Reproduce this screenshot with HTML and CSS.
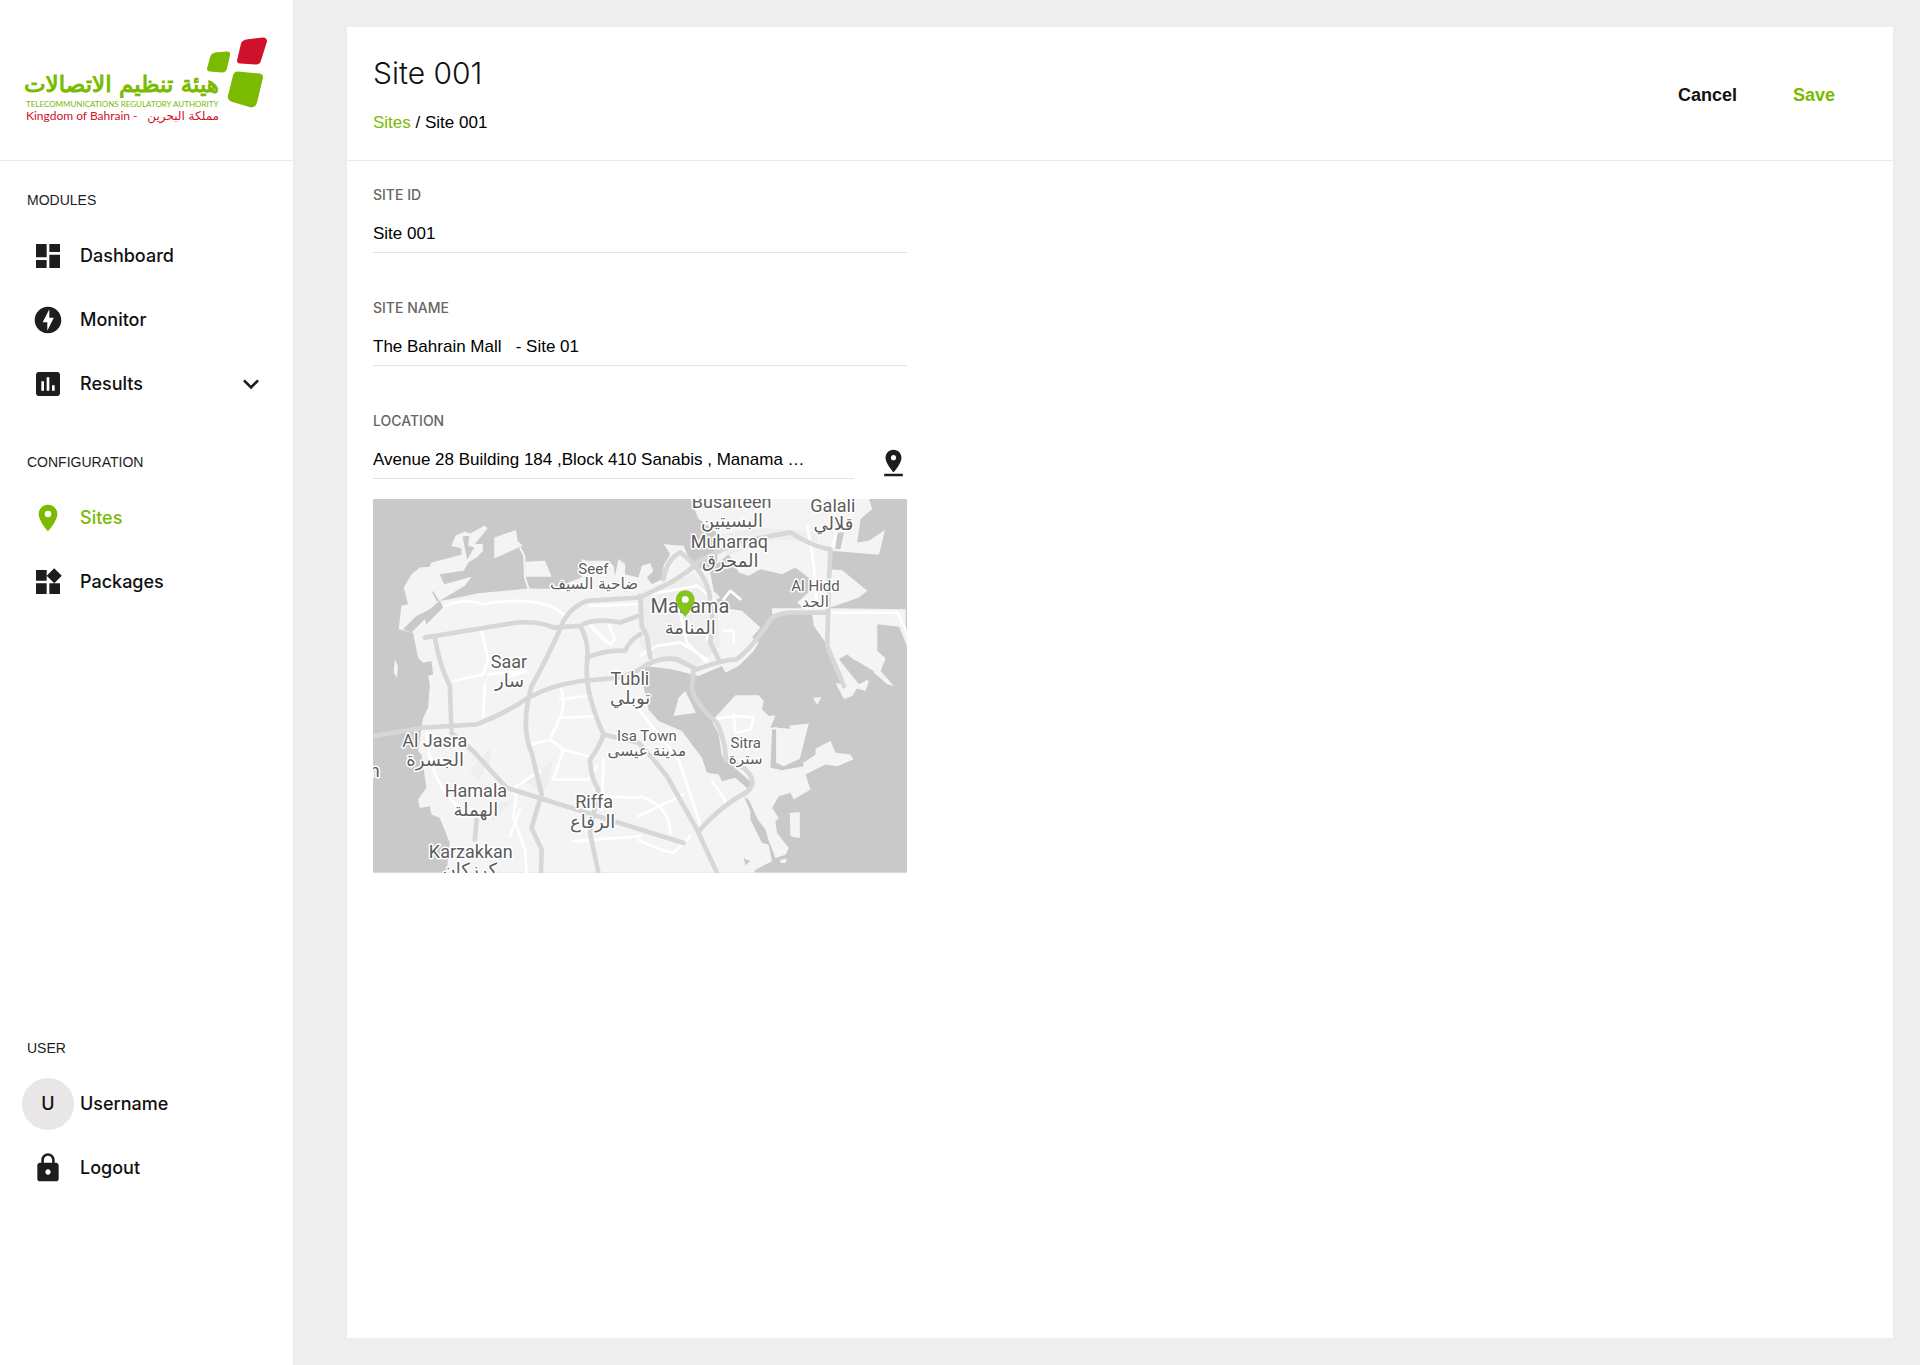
FILE: index.html
```html
<!DOCTYPE html>
<html lang="en">
<head>
<meta charset="utf-8">
<meta name="viewport" content="width=device-width, initial-scale=1">
<title>Site 001</title>
<link rel="stylesheet" href="styles.css">
</head>
<body>
<div class="app">
  <aside class="sidebar">
    <div class="brand">
      <svg class="logo" viewBox="0 0 242 90" role="img" aria-label="Telecommunications Regulatory Authority">
        <path class="logo-green" d="M190 22Q191 18 195 17L207 16Q211 16 210 20L207 33Q206 37 202 37L190 36Q187 36 187 33Z"/>
        <path class="logo-red" d="M221 8Q222 5 226 4L243 2Q247 2 247 6L241 25Q240 29 236 29L220 28Q217 28 217 25Z"/>
        <path class="logo-green" d="M213 40Q214 36 218 36L239 38Q243 38 243 42L237 67Q236 72 231 72L211 66Q207 64 208 60Z"/>
        <text class="logo-ar" x="199" y="56">هيئة تنظيم الاتصالات</text>
        <text class="logo-en" x="6" y="71">TELECOMMUNICATIONS REGULATORY AUTHORITY</text>
        <text class="logo-sub" x="6" y="84">Kingdom of Bahrain -</text>
        <text class="logo-sub-ar" x="199" y="84">مملكة البحرين</text>
      </svg>
    </div>
    <nav class="section">
      <h2 class="section-title">MODULES</h2>
      <a class="item" href="#"><span class="cell"><svg class="icon" viewBox="0 0 24 24"><path d="M3 13h8V3H3v10zm0 8h8v-6H3v6zm10 0h8V11h-8v10zm0-18v6h8V3h-8z"/></svg></span>Dashboard</a>
      <a class="item" href="#"><span class="cell"><svg class="icon" viewBox="0 0 24 24"><path d="M12 2.020c-5.510 0-9.980 4.470-9.980 9.980s4.470 9.980 9.980 9.980 9.980-4.470 9.980-9.980S17.510 2.020 12 2.020zM11.480 20v-6.260H8L13 4v6.260h3.350L11.480 20z"/></svg></span>Monitor</a>
      <a class="item" href="#"><span class="cell"><svg class="icon" viewBox="0 0 24 24"><path d="M19 3H5c-1.100 0-2 .9-2 2v14c0 1.100.9 2 2 2h14c1.100 0 2-.9 2-2V5c0-1.100-.9-2-2-2zM9 17H7v-7h2v7zm4 0h-2V7h2v10zm4 0h-2v-4h2v4z"/></svg></span>Results<svg class="icon chevron" viewBox="0 0 24 24"><path d="M7.410 8.590L12 13.170l4.590-4.580L18 10l-6 6-6-6 1.410-1.410z"/></svg></a>
    </nav>
    <nav class="section section-config">
      <h2 class="section-title">CONFIGURATION</h2>
      <a class="item item-active" href="#"><span class="cell"><svg class="icon" viewBox="0 0 24 24"><path d="M12 2C8.130 2 5 5.130 5 9c0 5.250 7 13 7 13s7-7.750 7-13c0-3.870-3.130-7-7-7zm0 9.500a2.500 2.500 0 0 1 0-5 2.500 2.500 0 0 1 0 5z"/></svg></span>Sites</a>
      <a class="item" href="#"><span class="cell"><svg class="icon" viewBox="0 0 24 24"><path d="M13 13v8h8v-8h-8zM3 21h8v-8H3v8zM3 3v8h8V3H3zm13.660-1.310L11 7.340 16.660 13l5.660-5.660-5.660-5.650z"/></svg></span>Packages</a>
    </nav>
    <nav class="section section-user">
      <h2 class="section-title">USER</h2>
      <a class="item" href="#"><span class="cell avatar">U</span>Username</a>
      <a class="item" href="#"><span class="cell"><svg class="icon" viewBox="0 0 24 24"><path d="M18 8h-1V6c0-2.760-2.240-5-5-5S7 3.240 7 6v2H6c-1.100 0-2 .9-2 2v10c0 1.100.9 2 2 2h12c1.100 0 2-.9 2-2V10c0-1.100-.9-2-2-2zm-6 9c-1.100 0-2-.9-2-2s.9-2 2-2 2 .9 2 2-.9 2-2 2zm3.100-9H8.900V6c0-1.710 1.390-3.100 3.100-3.100 1.710 0 3.100 1.390 3.100 3.100v2z"/></svg></span>Logout</a>
    </nav>
  </aside>

  <main class="main">
    <div class="card">
      <header class="card-header">
        <div>
          <h1 class="title">Site 001</h1>
          <p class="breadcrumb"><a href="#">Sites</a> / Site 001</p>
        </div>
        <div class="actions">
          <button class="action" type="button">Cancel</button>
          <button class="action action-save" type="submit" form="site-form">Save</button>
        </div>
      </header>
      <form class="form" id="site-form">
        <div class="field">
          <label for="site-id">SITE ID</label>
          <input id="site-id" type="text" value="Site 001">
        </div>
        <div class="field">
          <label for="site-name">SITE NAME</label>
          <input id="site-name" type="text" value="The Bahrain Mall &nbsp; - Site 01">
        </div>
        <div class="field">
          <label for="location">LOCATION</label>
          <div class="location-row">
            <input id="location" type="text" value="Avenue 28 Building 184 ,Block 410 Sanabis , Manama …">
            <button class="pin-button" type="button" aria-label="Pick on map"><svg viewBox="2 0 20 24"><path d="M18 8c0-3.310-2.690-6-6-6S6 4.690 6 8c0 4.500 6 11 6 11s6-6.500 6-11zm-8 0c0-1.100.9-2 2-2s2 .9 2 2-.89 2-2 2c-1.100 0-2-.9-2-2zM5 20v2h14v-2H5z"/></svg></button>
          </div>
          <svg class="map" viewBox="0 0 1599 1119" role="img" aria-label="Map of northern Bahrain">
            <rect class="sea" width="1599" height="1119"/>
            <g class="land">
              <path d="M115 400L77 390 85 320 105 315 92 265 115 225 140 205 170 203 175 190 265 167 265 148 235 140 247 110 275 97 290 103 335 79 343 88 305 135 328 135 330 155 310 175 285 190 272 215 200 225 213 255 295 233 275 260 200 305 230 300 315 282 465 268 575 270 585 250 625 235 625 180 640 185 705 185 720 200 725 230 735 180 755 195 755 225 795 235 805 200 830 192 840 215 820 235 835 255 865 240 870 200 890 165 870 135 895 138 930 140 945 175 960 200 1010 220 1020 275 1040 295 1010 310 1040 325 1105 335 1160 385 1135 415 1155 430 1140 455 1095 500 1055 520 1045 500 975 530 895 510 815 500 810 560 825 630 855 665 925 695 985 775 1000 820 1035 825 1045 845 1085 835 1125 870 1120 895 1140 955 1185 1035 1195 1085 1145 1110 1140 1119 220 1119 230 1030 220 1005 200 955 175 945 170 920 140 925 135 900 160 865 145 765 135 755 150 655 165 625 170 555 165 530 180 525 175 485 150 490 135 475 120 400Z"/>
              <path d="M363 115L428 93 433 125 448 140 363 178ZM457 188L515 185 535 233 457 233ZM65 480L75 500 72 535 62 520Z"/>
              <path d="M950 0L1485 0 1495 30 1460 60 1450 130 1485 125 1533 93 1515 167 1370 155 1365 210 1405 213 1480 275 1455 295 1370 325 1370 327 1595 330 1595 385 1510 375 1510 455 1533 475 1515 525 1440 480 1470 540 1485 545 1475 575 1405 555 1355 430 1320 380 1315 345 1195 345 1195 327 1290 327 1270 310 1315 270 1310 240 1265 205 1225 225 1160 210 1125 230 1095 220 1065 165 1030 195 1035 105 975 60Z"/>
              <path d="M1490 455L1535 478 1520 515 1560 560 1540 555 1500 520ZM1570 370L1599 395 1599 440Z"/>
              <path d="M1015 665L1085 588 1155 588 1170 605 1165 630 1185 650 1205 648 1190 685 1305 672 1275 790 1330 745 1370 725 1385 760 1430 765 1438 780 1390 800 1355 795 1295 825 1310 870 1260 900 1250 880 1215 890 1195 925 1215 955 1205 965 1210 1000 1245 1045 1235 1065 1205 1075 1190 1035 1145 945 1120 890 1140 855 1095 815 1045 770 1035 705Z"/>
              <path d="M1248 940L1278 937 1278 1015 1250 1010ZM900 650L915 595 935 575 950 605 967 640ZM1317 595L1343 593 1330 617ZM1385 550L1450 565 1435 590 1410 600ZM1220 1080L1240 1077 1235 1090 1220 1090Z"/>
            </g>
            <g class="water-cut">
              <path d="M90 390L130 350 170 330 200 305 210 325 160 375 155 360 115 400ZM268 112L288 110 285 140 303 145 282 182ZM180 275L198 305 192 308 178 280Z"/>
              <path d="M1110 890L1130 910 1145 950 1175 990 1188 1035 1165 1030 1130 960 1130 935ZM1395 480L1420 465 1450 490 1475 545 1455 555ZM1390 100L1410 100 1400 150 1385 150ZM1110 1075L1130 1085 1115 1097Z"/>
              <path d="M1195 690L1207 690 1207 790 1230 800 1285 775 1290 800 1225 812 1190 805ZM1215 665L1245 675 1250 688 1210 685ZM1285 780L1325 740 1325 765 1290 790Z"/>
            </g>
            <path class="causeway" d="M440 145L453 170 455 235 467 272"/>
            <g class="urban">
              <path d="M790 285L960 225 1030 300 1040 440 960 510 850 470 800 440ZM1020 110L1160 85 1330 100 1330 130 1200 120 1060 170ZM290 815L350 745 350 790 315 840ZM455 845L540 780 525 850 505 885ZM350 920L420 900 360 965Z"/>
            </g>
            <g class="street">
              <path d="M215 320Q280 295 330 315Q500 285 570 345M325 395L345 480 330 525 240 545M345 525L460 515 400 535M335 555L330 650M650 375L710 435 725 420 705 375M650 380L700 430M560 560Q580 610 560 655L530 720 475 735M560 600L640 590M560 655L665 650M530 720L570 750 660 775M570 750L540 840 645 840 670 800M500 815Q460 840 415 870L430 890 420 950 455 1050 460 1119M410 1010L440 930M160 700Q170 850 260 925M690 780L685 930M685 890L795 895M600 1025L800 1010M795 630L915 780 980 975M650 320L800 315M800 290L970 260 1020 300 1000 420M800 470L850 440 920 430 1000 480M920 340L940 430 1010 500M1080 430L1080 395 1050 395M1080 645L1085 700M1025 660Q1080 645 1140 655L1130 690 1090 700M795 950L930 885M800 890Q890 920 890 1000M1015 845Q1050 890 1060 920M795 1020Q850 1050 900 1060L950 1010M1300 80Q1325 200 1330 325M1370 340L1570 340 1599 400M1390 95L1370 160M1050 300L1070 275 1100 300"/>
            </g>
            <g class="road">
              <path d="M0 710L150 685 310 675Q400 640 465 595Q530 560 620 545L740 535 800 510M155 415L430 370Q500 365 540 385L620 380Q660 355 740 370L795 350M185 415Q200 500 230 560L235 690M235 700L300 755 400 865M400 865L930 1030M475 560Q440 680 475 760L505 885Q490 930 475 985L505 1050 503 1119M475 560Q520 480 560 390Q580 330 640 305L800 295 900 245Q940 220 970 195M310 960L305 1020M620 380Q650 430 640 500Q635 580 690 705M690 705Q680 740 650 780Q650 830 675 870L650 1000 675 1119M690 705L795 730Q850 790 880 830L970 990 1030 1119M640 475Q700 450 755 455Q770 420 800 405"/>
              <path d="M800 510Q850 470 910 480L970 510Q1050 480 1090 480Q1150 430 1190 360Q1215 338 1260 340L1365 340M800 290L805 380 820 410 830 475M870 240Q880 180 920 160Q1000 220 1010 300Q1020 370 1010 430L1035 480M970 190L1090 130 1250 100Q1320 145 1370 150L1365 250 1360 440 1410 560M960 510L955 570Q970 620 1030 670Q1060 740 1055 780L1110 805Q1160 850 1115 880Q1040 920 975 995"/>
            </g>
            <g class="place">
              <text x="660" y="224">Seef</text><text x="1325" y="277">Al Hidd</text><text x="820" y="724">Isa Town</text><text x="1116" y="747">Sitra</text>
            </g>
            <g class="place place-town">
              <text x="1074" y="27">Busaiteen</text><text x="1377" y="39">Galali</text><text x="1067" y="148">Muharraq</text><text x="407" y="507">Saar</text><text x="769" y="557">Tubli</text><text x="185" y="743">Al Jasra</text><text x="308" y="891">Hamala</text><text x="662" y="926">Riffa</text><text x="293" y="1074">Karzakkan</text><text x="5" y="832">n</text>
            </g>
            <g class="place place-city"><text x="949" y="341">Manama</text></g>
            <g class="place place-ar">
              <text x="662" y="270">ضاحية السيف</text><text x="1325" y="322">الحد</text><text x="820" y="769">مدينة عيسى</text><text x="1116" y="794">سترة</text>
            </g>
            <g class="place place-ar place-ar-town">
              <text x="1075" y="84">البسيتين</text><text x="1379" y="92">قلالي</text><text x="1070" y="203">المحرق</text><text x="409" y="562">سار</text><text x="770" y="614">توبلي</text><text x="186" y="799">الجسرة</text><text x="308" y="948">الهملة</text><text x="658" y="985">الرفاع</text><text x="290" y="1130">كرزكان</text><text x="950" y="403">المنامة</text>
            </g>
            <path class="marker" transform="translate(887 265) scale(4)" d="M12 2C8.130 2 5 5.130 5 9c0 5.250 7 13 7 13s7-7.750 7-13c0-3.870-3.130-7-7-7zm0 9.500a2.500 2.500 0 0 1 0-5 2.500 2.500 0 0 1 0 5z"/>
            <circle class="marker-hole" cx="935" cy="301" r="10"/>
          </svg>
        </div>
      </form>
    </div>
  </main>
</div>
</body>
</html>
```
FILE: styles.css
```css
:root {
  --green: #7aba00;
  --red: #d0112b;
  --ink: #1d1d1d;
  --line: #e8e8e8;
  --ui: "Liberation Sans", Arial, sans-serif;
  --medium: Inter, "Liberation Sans", sans-serif;
}
* { box-sizing: border-box; }
body {
  margin: 0;
  background: #eee;
  color: #000;
  font: 17px/24px var(--ui);
}
a { color: inherit; text-decoration: none; }
h1, h2, p { margin: 0; font-weight: 400; }
button { padding: 0; border: 0; background: none; cursor: pointer; }

.app { display: flex; min-height: 100vh; }

/* Sidebar */
.sidebar {
  display: flex;
  flex: none;
  flex-direction: column;
  width: 293px;
  background: #fff;
}
.brand {
  padding: 35px 20px 34px;
  border-bottom: 1px solid var(--line);
}
.logo { display: block; width: 242px; height: 91px; overflow: visible; }
.logo-green { fill: var(--green); }
.logo-red { fill: var(--red); }
.logo text { font-family: "DejaVu Sans", sans-serif; }
.logo .logo-ar {
  direction: rtl;
  fill: var(--green);
  stroke: var(--green);
  stroke-width: 1px;
  font-size: 23px;
}
.logo .logo-en { fill: var(--green); font-family: Lato, sans-serif; font-size: 8px; }
.logo .logo-sub { fill: var(--red); font-family: Lato, sans-serif; font-size: 12px; }
.logo .logo-sub-ar { direction: rtl; fill: var(--red); font-size: 12px; }

.section { padding-top: 27px; }
.section-config { padding-top: 34px; }
.section-user { margin-top: auto; padding-bottom: 165px; }
.section-title {
  margin-bottom: 12px;
  padding-left: 27px;
  color: var(--ink);
  font-size: 14px;
  line-height: 24px;
}
.item {
  display: flex;
  align-items: center;
  gap: 6px;
  height: 64px;
  padding: 0 26px 0 22px;
  color: #111;
  font: 500 18px/24px var(--medium);
}
.item-active { color: var(--green); }
.cell {
  display: flex;
  flex: none;
  align-items: center;
  justify-content: center;
  width: 52px;
  height: 52px;
}
.avatar { border-radius: 50%; background: #e9e7e8; }
.icon { display: block; width: 32px; height: 32px; fill: var(--ink); }
.item-active .icon { fill: var(--green); }
.chevron { margin-left: auto; }

/* Page */
.main { display: flex; flex: 1; padding: 27px 27px 27px 54px; }
.card { flex: 1; background: #fff; }
.card-header {
  display: flex;
  align-items: center;
  justify-content: space-between;
  padding: 26px 58px 25px 26px;
  border-bottom: 1px solid var(--line);
}
.title { margin-bottom: 18px; color: #111; font: 300 30px/40px var(--medium); }
.breadcrumb a { color: var(--green); }
.actions { display: flex; gap: 56px; padding-top: 2px; }
.action { color: #111; font: 700 18px/24px var(--ui); }
.action-save { color: var(--green); }

.form {
  display: flex;
  flex-direction: column;
  gap: 45px;
  max-width: 586px;
  padding: 24px 26px;
}
.field { display: flex; flex-direction: column; gap: 11px; }
.field label { color: #666; font: 500 14px/20px var(--medium); }
.field input {
  width: 100%;
  height: 37px;
  padding: 0;
  border: 0;
  border-bottom: 1px solid #e2e2e2;
  background: none;
  color: #000;
  font: 17px/24px var(--ui);
  outline: 0;
}
.location-row { display: flex; gap: 26px; }
.location-row input { flex: 1; min-width: 0; }
.pin-button { width: 27px; height: 37px; }
.pin-button svg { display: block; width: 27px; height: 32px; margin-top: 5px; fill: var(--ink); }

/* Map */
.map { display: block; width: 100%; height: auto; margin-top: 9px; }
.sea, .water-cut { fill: #c9c9c9; }
.land { fill: #f4f4f4; }
.causeway { fill: none; stroke: #f4f4f4; stroke-width: 6px; }
.urban { fill: #eee; }
.street, .road { fill: none; stroke-linejoin: round; stroke-linecap: round; }
.street { stroke: #fff; stroke-width: 8px; }
.road { stroke: #d7d7d7; stroke-width: 14px; }
.place {
  fill: #5c5c5c;
  stroke: #fff;
  stroke-width: 9px;
  stroke-linejoin: round;
  paint-order: stroke;
  font-family: Roboto, sans-serif;
  font-size: 45px;
  text-anchor: middle;
}
.place-town { font-size: 54px; }
.place-city { font-size: 60px; }
.place-ar { font-family: "DejaVu Sans", sans-serif; font-size: 46px; }
.place-ar-town { font-size: 54px; }
.marker { fill: #86c41c; }
.marker-hole { fill: #fff; }
```
